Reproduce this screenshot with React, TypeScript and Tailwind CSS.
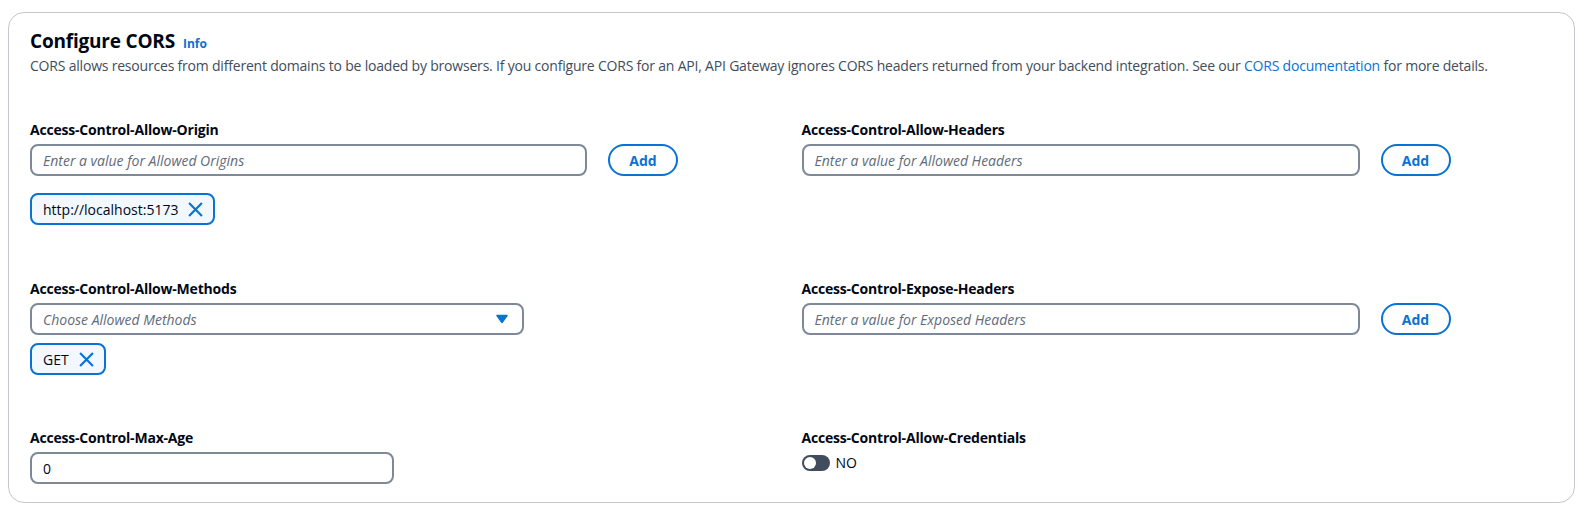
const FONT = { fontFamily: '"Open Sans", "Noto Sans", Arial, sans-serif' };

function Label({ children }: { children: React.ReactNode }) {
    return <div className="text-[14px] font-bold leading-[18px] tracking-[-0.2px] text-[#000716] mb-[5px]">{children}</div>;
}

function TextInput({ placeholder, width, value }: { placeholder?: string; width: string; value?: string }) {
    return (
        <div className={`${width} h-[32px] rounded-[8px] border-2 border-[#7d8998] px-[11px] flex items-center text-[14px]`}>
            {value ? (
                <span className="text-[#000716]">{value}</span>
            ) : (
                <span className="italic text-[#5f6b7a]">{placeholder}</span>
            )}
        </div>
    );
}

function AddButton() {
    return (
        <button className="w-[70px] h-[32px] rounded-full border-2 border-[#0972d3] text-[#0972d3] text-[14px] font-bold flex items-center justify-center">
            Add
        </button>
    );
}

function Token({ label }: { label: string }) {
    return (
        <div className="inline-flex items-center h-[32px] rounded-[8px] border-2 border-[#0972d3] bg-[#f2f8fd] pl-[11px] pr-[10px] gap-[10px] text-[14px] text-[#000716]">
            <span>{label}</span>
            <svg width="15" height="15" viewBox="0 0 14 14" fill="none" stroke="#0972d3" strokeWidth="2">
                <path d="M1 1l12 12M13 1L1 13" />
            </svg>
        </div>
    );
}

export default function App() {
    return (
        <div className="min-h-screen bg-white pt-[12px] px-[8px]" style={FONT}>
            <div className="h-[491px] w-[1567px] rounded-[16px] border border-[#c6c6cd] px-[21px] pt-[15px]">
                <header>
                    <h2 className="flex items-baseline gap-[8px]">
                        <span className="text-[19px] font-bold leading-[26px] tracking-[-0.2px] text-[#000716]">Configure CORS</span>
                        <span className="text-[12px] font-bold text-[#0972d3]">Info</span>
                    </h2>
                    <p className="text-[14px] leading-[20px] tracking-[-0.2px] text-[#414d5c] mt-[2px]">
                        CORS allows resources from different domains to be loaded by browsers. If you configure CORS for an API, API Gateway ignores CORS headers returned from your backend integration. See our{" "}
                        <span className="text-[#0972d3]">CORS documentation</span> for more details.
                    </p>
                </header>

                <div className="grid grid-cols-2 gap-x-[20px] mt-[45px]">
                    <div className="h-[159px]">
                        <Label>Access-Control-Allow-Origin</Label>
                        <div className="flex items-center gap-[21px]">
                            <TextInput width="w-[557px]" placeholder="Enter a value for Allowed Origins" />
                            <AddButton />
                        </div>
                        <div className="mt-[17px]">
                            <Token label="http://localhost:5173" />
                        </div>
                    </div>
                    <div>
                        <Label>Access-Control-Allow-Headers</Label>
                        <div className="flex items-center gap-[21px]">
                            <TextInput width="w-[558px]" placeholder="Enter a value for Allowed Headers" />
                            <AddButton />
                        </div>
                    </div>

                    <div className="h-[149px]">
                        <Label>Access-Control-Allow-Methods</Label>
                        <div className="w-[494px] h-[32px] rounded-[8px] border-2 border-[#7d8998] pl-[11px] pr-[14px] flex items-center justify-between text-[14px]">
                            <span className="italic text-[#5f6b7a]">Choose Allowed Methods</span>
                            <svg width="12" height="10" viewBox="0 0 12 10">
                                <path d="M1 1.5h10L6 8.5z" fill="#0972d3" stroke="#0972d3" strokeWidth="1.5" strokeLinejoin="round" />
                            </svg>
                        </div>
                        <div className="mt-[8px]">
                            <Token label="GET" />
                        </div>
                    </div>
                    <div>
                        <Label>Access-Control-Expose-Headers</Label>
                        <div className="flex items-center gap-[21px]">
                            <TextInput width="w-[558px]" placeholder="Enter a value for Exposed Headers" />
                            <AddButton />
                        </div>
                    </div>

                    <div>
                        <Label>Access-Control-Max-Age</Label>
                        <TextInput width="w-[364px]" value="0" />
                    </div>
                    <div>
                        <Label>Access-Control-Allow-Credentials</Label>
                        <div className="flex items-center gap-[6px] mt-[3px]">
                            <div className="w-[28px] h-[16px] rounded-full bg-[#414d5c] flex items-center px-[2px]">
                                <div className="w-[12px] h-[12px] rounded-full bg-white" />
                            </div>
                            <span className="text-[14px] text-[#000716]">NO</span>
                        </div>
                    </div>
                </div>
            </div>
        </div>
    );
}
